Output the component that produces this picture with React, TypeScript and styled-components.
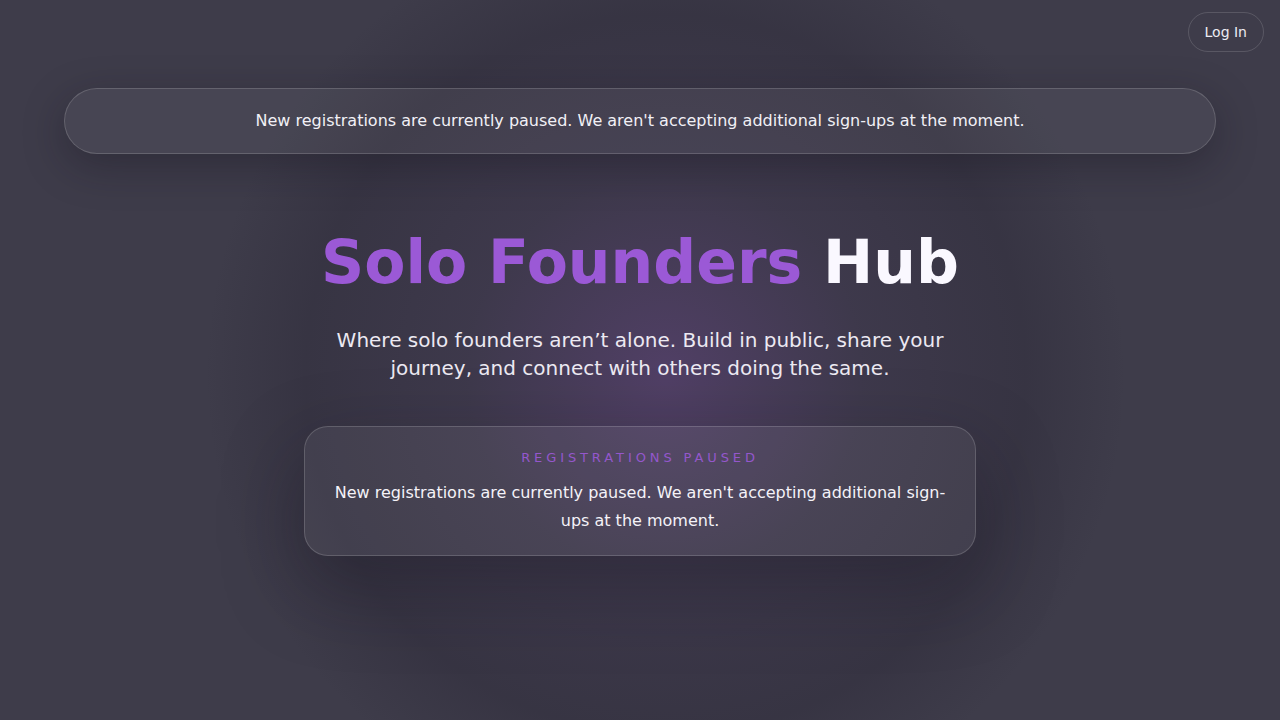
import React from 'react';
import styled, { createGlobalStyle } from 'styled-components';

const GlobalStyle = createGlobalStyle`
  * {
    box-sizing: border-box;
  }

  html,
  body {
    margin: 0;
    padding: 0;
    background: #3e3c4a;
  }

  body {
    font-family: 'DejaVu Sans', 'Noto Sans', sans-serif;
    color: #f4f2f8;
  }
`;

const Page = styled.div`
  position: relative;
  min-height: 720px;
  overflow: hidden;
  display: flex;
  flex-direction: column;
  align-items: center;
  background:
    radial-gradient(circle at 52% 52%, rgba(120, 70, 160, 0.32) 0, rgba(60, 45, 80, 0.22) 200px, rgba(40, 36, 52, 0.32) 360px, rgba(62, 60, 74, 0) 460px),
    #3e3c4a;
`;

const TopBar = styled.header`
  align-self: stretch;
  display: flex;
  justify-content: flex-end;
  padding: 12px 16px 0;
`;

const LoginButton = styled.button`
  height: 40px;
  padding: 0 16px;
  border-radius: 999px;
  border: 1px solid rgba(255, 255, 255, 0.14);
  background: transparent;
  color: #ecebf2;
  font-family: inherit;
  font-size: 14px;
  cursor: pointer;
`;

const Banner = styled.div`
  margin-top: 36px;
  width: calc(100% - 128px);
  height: 66px;
  padding-bottom: 1px;
  display: flex;
  align-items: center;
  justify-content: center;
  border-radius: 33px;
  border: 1px solid rgba(255, 255, 255, 0.16);
  background: rgba(255, 255, 255, 0.05);
  box-shadow: 0 12px 40px rgba(20, 18, 30, 0.35);
  font-size: 16px;
  line-height: 24px;
  color: #f1f0f6;
`;

const Hero = styled.main`
  margin-top: 72px;
  display: flex;
  flex-direction: column;
  align-items: center;
  text-align: center;
`;

const Title = styled.h1`
  margin: 0;
  font-size: 60px;
  line-height: 72px;
  font-weight: 700;
  color: #faf8ff;
`;

const Accent = styled.span`
  color: #9b59d6;
`;

const Tagline = styled.p`
  margin: 28px 0 0;
  max-width: 672px;
  font-size: 20px;
  line-height: 28px;
  color: #ece9f2;
`;

const Notice = styled.section`
  margin-top: 44px;
  width: 672px;
  padding: 21px 28px 20px;
  border-radius: 24px;
  border: 1px solid rgba(255, 255, 255, 0.16);
  background: rgba(255, 255, 255, 0.06);
  box-shadow: 0 30px 80px rgba(20, 16, 30, 0.35);
`;

const NoticeLabel = styled.div`
  font-size: 13px;
  line-height: 20px;
  letter-spacing: 0.3em;
  text-transform: uppercase;
  color: #9457cc;
`;

const NoticeText = styled.p`
  margin: 11px 0 0;
  font-size: 16px;
  line-height: 28px;
  color: #f4f2f8;
`;

const MESSAGE = "New registrations are currently paused. We aren't accepting additional sign-ups at the moment.";

export default function App() {
  return (
    <>
      <GlobalStyle />
      <Page>
        <TopBar>
          <LoginButton>Log In</LoginButton>
        </TopBar>
        <Banner>{MESSAGE}</Banner>
        <Hero>
          <Title>
            <Accent>Solo Founders</Accent> Hub
          </Title>
          <Tagline>
            Where solo founders aren’t alone. Build in public, share your journey, and connect with others doing the same.
          </Tagline>
          <Notice>
            <NoticeLabel>Registrations paused</NoticeLabel>
            <NoticeText>{MESSAGE}</NoticeText>
          </Notice>
        </Hero>
      </Page>
    </>
  );
}
